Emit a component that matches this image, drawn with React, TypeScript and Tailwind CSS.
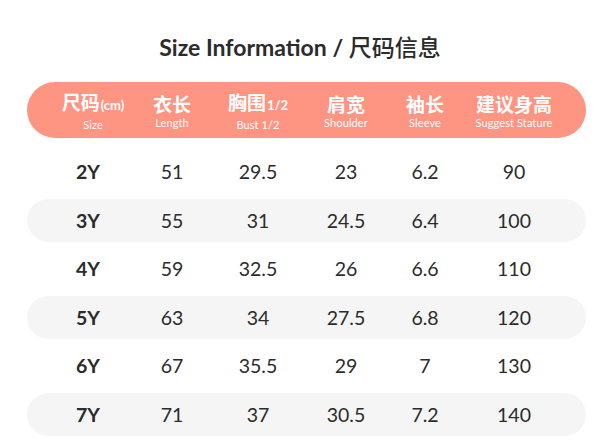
import React from "react";

const rows = [
  ["2Y", "51", "29.5", "23", "6.2", "90"],
  ["3Y", "55", "31", "24.5", "6.4", "100"],
  ["4Y", "59", "32.5", "26", "6.6", "110"],
  ["5Y", "63", "34", "27.5", "6.8", "120"],
  ["6Y", "67", "35.5", "29", "7", "130"],
  ["7Y", "71", "37", "30.5", "7.2", "140"],
];

const grid = "grid grid-cols-[122px_46px_126px_50px_108px_70px]";

function Head({ cn, en, small, first }: { cn: string; en: string; small?: string; first?: boolean }) {
  return (
    <div className={`flex flex-col items-center justify-center whitespace-nowrap pt-[2px] ${first ? "pl-[10px]" : ""}`}>
      <div className="flex items-baseline leading-[19px]">
        <span className="text-[19px] font-bold [font-family:'Noto_Sans_CJK_SC',sans-serif]">{cn}</span>
        {small && <span className="ml-[1px] text-[13px] font-bold [font-family:Lato,sans-serif]">{small}</span>}
      </div>
      <div className="mt-[4px] text-[11px] leading-[11px] tracking-[0.1px] [font-family:Lato,sans-serif]">{en}</div>
    </div>
  );
}

export default function App() {
  return (
    <div className="w-[600px] h-[446px] bg-white overflow-hidden [font-family:Lato,'Noto_Sans_CJK_SC',sans-serif] text-[#2b2b2b]">
      <h1 className="pt-[32px] text-center text-[23px] font-bold leading-[28px] text-[#2b2b2b]">
        Size Information / <span className="[font-family:'Noto_Sans_CJK_SC',sans-serif] font-medium">尺码信息</span>
      </h1>
      <div className="mx-[27px] mt-[21px] w-[559px]">
        <div className={`${grid} h-[56px] rounded-full bg-[#fe9482] text-white`}>
          <Head cn="尺码" small="(cm)" en="Size" first />
          <Head cn="衣长" en="Length" />
          <Head cn="胸围" small="1/2" en="Bust 1/2" />
          <Head cn="肩宽" en="Shoulder" />
          <Head cn="袖长" en="Sleeve" />
          <Head cn="建议身高" en="Suggest Stature" />
        </div>
        <div className="mt-[12.5px] flex flex-col gap-[5.5px]">
          {rows.map((r, i) => (
            <div key={r[0]} className={`${grid} h-[43px] rounded-full ${i % 2 === 1 ? "bg-[#f5f5f5]" : ""}`}>
              {r.map((c, j) => (
                <div key={j} className={`flex items-center justify-center whitespace-nowrap text-[19.5px] ${j === 0 ? "font-bold" : ""}`}>
                  {c}
                </div>
              ))}
            </div>
          ))}
        </div>
      </div>
    </div>
  );
}
